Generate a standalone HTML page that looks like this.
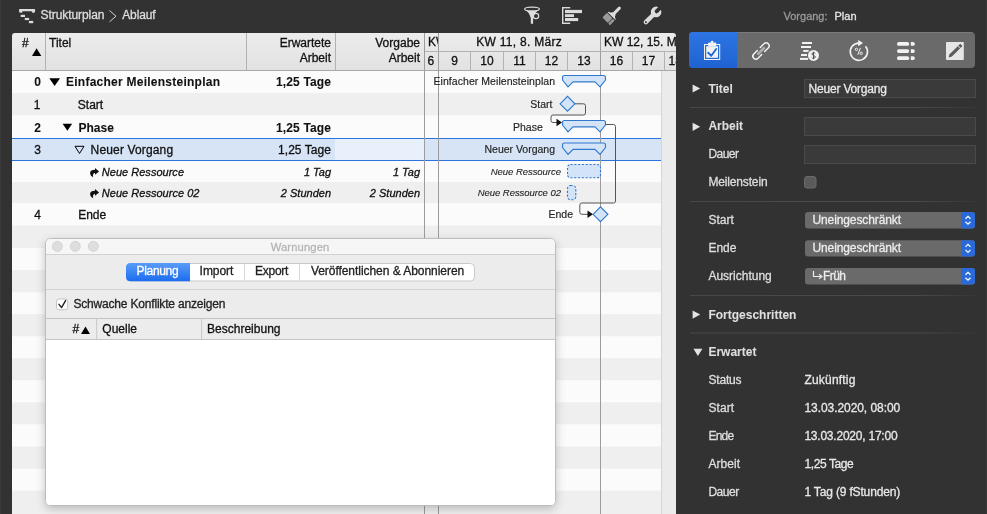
<!DOCTYPE html>
<html><head><meta charset="utf-8"><title>Ablauf</title>
<style>html,body{margin:0;padding:0;background:#323232;}body{width:987px;height:514px;overflow:hidden;}svg{display:block;font-family:"Liberation Sans", sans-serif;will-change:transform;}</style>
</head><body>
<svg width="987" height="514" viewBox="0 0 987 514">
<defs><linearGradient id="hdr" x1="0" y1="0" x2="0" y2="1"><stop offset="0" stop-color="#ececec"/><stop offset="1" stop-color="#e2e2e2"/></linearGradient><linearGradient id="blue" x1="0" y1="0" x2="0" y2="1"><stop offset="0" stop-color="#2d74e4"/><stop offset="1" stop-color="#1f63d2"/></linearGradient><linearGradient id="blue2" x1="0" y1="0" x2="0" y2="1"><stop offset="0" stop-color="#5a9cf8"/><stop offset="1" stop-color="#1b6cf0"/></linearGradient><linearGradient id="sep" x1="0" y1="0" x2="1" y2="0"><stop offset="0" stop-color="#484848"/><stop offset="0.8" stop-color="#4a4a4a"/><stop offset="1" stop-color="#363636"/></linearGradient><filter id="shadow" x="-10%" y="-10%" width="120%" height="120%"><feDropShadow dx="0" dy="3" stdDeviation="5" flood-color="#000" flood-opacity="0.22"/></filter></defs>
<rect x="0" y="0" width="987" height="514" fill="#323232" /><rect x="0" y="0" width="1" height="514" fill="#3a3a3a" /><rect x="985.6" y="0" width="1.4" height="514" fill="#393939" /><g fill="#dcdcdc"><rect x="19" y="9" width="16.2" height="2.2" rx="1"/><rect x="19.2" y="9.2" width="3.2" height="3.6" rx="1.2"/><rect x="31.8" y="9.2" width="3.2" height="3.6" rx="1.2"/><rect x="20.7" y="14.8" width="4.3" height="2.2"/><rect x="24.8" y="17.9" width="4.3" height="2.2"/><rect x="28.9" y="20.9" width="4.3" height="2.3"/></g><text x="40.5" y="19.1" font-size="12" fill="#dedede" font-weight="normal" font-style="normal" text-anchor="start" textLength="64" lengthAdjust="spacing" stroke="#dedede" stroke-width="0.3" >Strukturplan</text><polyline points="109.5,10.5 116,16.2 109.5,21.8" fill="none" stroke="#cfcfcf" stroke-width="1"/><text x="122.2" y="19.1" font-size="12" fill="#dedede" font-weight="normal" font-style="normal" text-anchor="start" textLength="33.5" lengthAdjust="spacing" stroke="#dedede" stroke-width="0.3" >Ablauf</text><g stroke="#dcdcdc" stroke-width="1.2" fill="none"><ellipse cx="532" cy="9" rx="7.4" ry="1.9"/><circle cx="536" cy="16" r="2.7"/></g><path d="M525.5,10.2 Q529,12 530.8,18 L530.8,23.8 L533.1,23.8 L533.1,18 Q535,12 538.5,10.2 Q532,12 525.5,10.2Z" fill="#dcdcdc"/><g fill="#dcdcdc"><rect x="562" y="7" width="1.4" height="17"/><rect x="562" y="7" width="8.2" height="1.4"/><rect x="562" y="22.6" width="8.2" height="1.4"/><rect x="565" y="9.9" width="17" height="3.2"/><rect x="565" y="14.2" width="9" height="2.8"/><rect x="565" y="18" width="13.2" height="3.1"/></g><g transform="translate(611.5,16) rotate(45)" fill="#dcdcdc"><rect x="-1.5" y="-12.6" width="3" height="9.6" rx="1.5"/><path d="M-1.8,-4 L1.8,-4 Q2.5,-1.5 5.4,-0.6 L5.4,0 L-5.4,0 L-5.4,-0.6 Q-2.5,-1.5 -1.8,-4 Z"/><rect x="-5.5" y="0.9" width="7.7" height="6.6" rx="1" fill="#9a9a9a"/><rect x="2.9" y="0.9" width="2.6" height="6.8" rx="0.8" fill="#9a9a9a"/></g><g transform="translate(651.5,16.5) rotate(45)"><rect x="-2.2" y="-4" width="4.4" height="14.2" rx="2.2" fill="#dcdcdc"/><circle cx="0" cy="-6.5" r="5.3" fill="#dcdcdc"/><rect x="-1.9" y="-13" width="3.8" height="5.8" fill="#323232"/><circle cx="0" cy="-7.2" r="1.9" fill="#323232"/><circle cx="0" cy="7.9" r="1" fill="#323232"/></g><rect x="12" y="71" width="650" height="443" fill="#efefef" /><rect x="12" y="71" width="650" height="22" fill="#fbfbfb" /><rect x="12" y="115.3" width="650" height="22.700000000000003" fill="#fbfbfb" /><rect x="12" y="160.5" width="650" height="21.5" fill="#fbfbfb" /><rect x="12" y="203" width="650" height="22.5" fill="#fbfbfb" /><rect x="12" y="248" width="650" height="22" fill="#fbfbfb" /><rect x="12" y="292.3" width="650" height="21.899999999999977" fill="#fbfbfb" /><rect x="12" y="336.2" width="650" height="22.0" fill="#fbfbfb" /><rect x="12" y="380.2" width="650" height="22.100000000000023" fill="#fbfbfb" /><rect x="12" y="424.3" width="650" height="22.19999999999999" fill="#fbfbfb" /><rect x="12" y="468.6" width="650" height="22.0" fill="#fbfbfb" /><rect x="12" y="138" width="650" height="22.5" fill="#d6e4f6" /><rect x="335" y="138" width="89" height="22.5" fill="#e8f0fb" /><line x1="12" y1="138.5" x2="662" y2="138.5" stroke="#2a74e2" stroke-width="1" /><line x1="12" y1="160.5" x2="662" y2="160.5" stroke="#2a74e2" stroke-width="1" /><rect x="662" y="71" width="14" height="443" fill="#ebebeb" /><line x1="661.5" y1="71" x2="661.5" y2="514" stroke="#d6d6d6" stroke-width="1" /><path d="M12,36 Q12,33 15,33 L673,33 Q676,33 676,36 L676,70 L12,70 Z" fill="url(#hdr)"/><line x1="12" y1="70.5" x2="676" y2="70.5" stroke="#a8a8a8" stroke-width="1" /><line x1="45.5" y1="33" x2="45.5" y2="70" stroke="#b2b2b2" stroke-width="1" /><line x1="246.5" y1="33" x2="246.5" y2="70" stroke="#b2b2b2" stroke-width="1" /><line x1="335.5" y1="33" x2="335.5" y2="70" stroke="#b2b2b2" stroke-width="1" /><line x1="424.5" y1="33" x2="424.5" y2="514" stroke="#9c9c9c" stroke-width="1" /><line x1="438.5" y1="33" x2="438.5" y2="514" stroke="#9c9c9c" stroke-width="1" /><line x1="600.5" y1="33" x2="600.5" y2="514" stroke="#9c9c9c" stroke-width="1" /><line x1="425" y1="51.5" x2="676" y2="51.5" stroke="#b2b2b2" stroke-width="1" /><line x1="470.5" y1="51.5" x2="470.5" y2="70" stroke="#b2b2b2" stroke-width="1" /><line x1="503.5" y1="51.5" x2="503.5" y2="70" stroke="#b2b2b2" stroke-width="1" /><line x1="535.5" y1="51.5" x2="535.5" y2="70" stroke="#b2b2b2" stroke-width="1" /><line x1="567.5" y1="51.5" x2="567.5" y2="70" stroke="#b2b2b2" stroke-width="1" /><line x1="632.5" y1="51.5" x2="632.5" y2="70" stroke="#b2b2b2" stroke-width="1" /><line x1="664.5" y1="51.5" x2="664.5" y2="70" stroke="#b2b2b2" stroke-width="1" /><text x="22" y="47" font-size="12" fill="#111" font-weight="normal" font-style="normal" text-anchor="start" stroke="#111" stroke-width="0.3" >#</text><path d="M32,56 L36.6,48.2 L41.3,56 Z" fill="#000"/><text x="49" y="47" font-size="12" fill="#111" font-weight="normal" font-style="normal" text-anchor="start" stroke="#111" stroke-width="0.3" >Titel</text><text x="331" y="46.7" font-size="12" fill="#111" font-weight="normal" font-style="normal" text-anchor="end" stroke="#111" stroke-width="0.3" >Erwartete</text><text x="331" y="61.9" font-size="12" fill="#111" font-weight="normal" font-style="normal" text-anchor="end" stroke="#111" stroke-width="0.3" >Arbeit</text><text x="420" y="46.7" font-size="12" fill="#111" font-weight="normal" font-style="normal" text-anchor="end" stroke="#111" stroke-width="0.3" >Vorgabe</text><text x="420" y="61.9" font-size="12" fill="#111" font-weight="normal" font-style="normal" text-anchor="end" stroke="#111" stroke-width="0.3" >Arbeit</text><clipPath id="kwclip"><rect x="425" y="33" width="13" height="20"/></clipPath><text x="428" y="45.8" font-size="12" fill="#111" font-weight="normal" font-style="normal" text-anchor="start" stroke="#111" stroke-width="0.3" clip-path="url(#kwclip)">KW</text><text x="519" y="45.8" font-size="12" fill="#111" font-weight="normal" font-style="normal" text-anchor="middle" textLength="85.5" lengthAdjust="spacing" stroke="#111" stroke-width="0.3" >KW 11, 8. März</text><clipPath id="kw12clip"><rect x="601" y="33" width="75" height="20"/></clipPath><text x="604" y="45.8" font-size="12" fill="#111" font-weight="normal" font-style="normal" text-anchor="start" stroke="#111" stroke-width="0.3" clip-path="url(#kw12clip)">KW 12, 15. März</text><clipPath id="dayclip"><rect x="425" y="52" width="251" height="18"/></clipPath><g clip-path="url(#dayclip)"><text x="427.6" y="64.8" font-size="12" fill="#111" font-weight="normal" font-style="normal" text-anchor="start" stroke="#111" stroke-width="0.3" >6</text><text x="454.5" y="64.8" font-size="12" fill="#111" font-weight="normal" font-style="normal" text-anchor="middle" stroke="#111" stroke-width="0.3" >9</text><text x="487.0" y="64.8" font-size="12" fill="#111" font-weight="normal" font-style="normal" text-anchor="middle" stroke="#111" stroke-width="0.3" >10</text><text x="519.5" y="64.8" font-size="12" fill="#111" font-weight="normal" font-style="normal" text-anchor="middle" stroke="#111" stroke-width="0.3" >11</text><text x="551.5" y="64.8" font-size="12" fill="#111" font-weight="normal" font-style="normal" text-anchor="middle" stroke="#111" stroke-width="0.3" >12</text><text x="584.0" y="64.8" font-size="12" fill="#111" font-weight="normal" font-style="normal" text-anchor="middle" stroke="#111" stroke-width="0.3" >13</text><text x="616.5" y="64.8" font-size="12" fill="#111" font-weight="normal" font-style="normal" text-anchor="middle" stroke="#111" stroke-width="0.3" >16</text><text x="648.5" y="64.8" font-size="12" fill="#111" font-weight="normal" font-style="normal" text-anchor="middle" stroke="#111" stroke-width="0.3" >17</text><text x="668.5" y="64.8" font-size="12" fill="#111" font-weight="normal" font-style="normal" text-anchor="start" stroke="#111" stroke-width="0.3" >18</text></g><text x="41" y="86" font-size="12" fill="#111" font-weight="bold" font-style="normal" text-anchor="end" stroke="#111" stroke-width="0.08" >0</text><path d="M49.3,78.2 L60,78.2 L54.65,86 Z" fill="#000"/><text x="66" y="86" font-size="12" fill="#111" font-weight="bold" font-style="normal" text-anchor="start" textLength="154" lengthAdjust="spacing" stroke="#111" stroke-width="0.08" >Einfacher Meilensteinplan</text><text x="331" y="86" font-size="12" fill="#111" font-weight="bold" font-style="normal" text-anchor="end" textLength="55" lengthAdjust="spacing" stroke="#111" stroke-width="0.08" >1,25 Tage</text><text x="40.5" y="108.6" font-size="12" fill="#111" font-weight="normal" font-style="normal" text-anchor="end" stroke="#111" stroke-width="0.3" >1</text><text x="77.8" y="108.6" font-size="12" fill="#111" font-weight="normal" font-style="normal" text-anchor="start" stroke="#111" stroke-width="0.3" >Start</text><text x="41" y="132" font-size="12" fill="#111" font-weight="bold" font-style="normal" text-anchor="end" stroke="#111" stroke-width="0.08" >2</text><path d="M62.6,123.8 L72.2,123.8 L67.4,130.8 Z" fill="#000"/><text x="78.5" y="131.8" font-size="12" fill="#111" font-weight="bold" font-style="normal" text-anchor="start" stroke="#111" stroke-width="0.08" >Phase</text><text x="331" y="131.8" font-size="12" fill="#111" font-weight="bold" font-style="normal" text-anchor="end" textLength="55" lengthAdjust="spacing" stroke="#111" stroke-width="0.08" >1,25 Tage</text><text x="41" y="154" font-size="12" fill="#111" font-weight="normal" font-style="normal" text-anchor="end" stroke="#111" stroke-width="0.3" >3</text><path d="M75,146.3 L84,146.3 L79.5,153.5 Z" fill="none" stroke="#000" stroke-width="1"/><text x="90.6" y="154" font-size="12" fill="#111" font-weight="normal" font-style="normal" text-anchor="start" textLength="82.5" lengthAdjust="spacing" stroke="#111" stroke-width="0.3" >Neuer Vorgang</text><text x="331" y="154" font-size="12" fill="#111" font-weight="normal" font-style="normal" text-anchor="end" textLength="53" lengthAdjust="spacing" stroke="#111" stroke-width="0.3" >1,25 Tage</text><g transform="translate(0,0)"><path d="M95,168 L99.1,171.4 L95,174.8 L95,173.1 Q92.6,173 93.1,177.2 Q89.9,175.8 90.1,172.6 Q90.4,169.6 95,169.7 Z" fill="#111"/></g><g transform="translate(0,21)"><path d="M95,168 L99.1,171.4 L95,174.8 L95,173.1 Q92.6,173 93.1,177.2 Q89.9,175.8 90.1,172.6 Q90.4,169.6 95,169.7 Z" fill="#111"/></g><text x="101.8" y="175.7" font-size="11" fill="#111" font-weight="normal" font-style="italic" text-anchor="start" textLength="82.2" lengthAdjust="spacing" stroke="#111" stroke-width="0.3" >Neue Ressource</text><text x="331" y="175.7" font-size="11" fill="#111" font-weight="normal" font-style="italic" text-anchor="end" stroke="#111" stroke-width="0.3" >1 Tag</text><text x="420" y="175.7" font-size="11" fill="#111" font-weight="normal" font-style="italic" text-anchor="end" stroke="#111" stroke-width="0.3" >1 Tag</text><text x="101.8" y="196.7" font-size="11" fill="#111" font-weight="normal" font-style="italic" text-anchor="start" textLength="97.6" lengthAdjust="spacing" stroke="#111" stroke-width="0.3" >Neue Ressource 02</text><text x="331" y="196.7" font-size="11" fill="#111" font-weight="normal" font-style="italic" text-anchor="end" stroke="#111" stroke-width="0.3" >2 Stunden</text><text x="420" y="196.7" font-size="11" fill="#111" font-weight="normal" font-style="italic" text-anchor="end" stroke="#111" stroke-width="0.3" >2 Stunden</text><text x="41" y="218.8" font-size="12" fill="#111" font-weight="normal" font-style="normal" text-anchor="end" stroke="#111" stroke-width="0.3" >4</text><text x="78.2" y="218.8" font-size="12" fill="#111" font-weight="normal" font-style="normal" text-anchor="start" stroke="#111" stroke-width="0.3" >Ende</text><text x="555" y="84.9" font-size="10.5" fill="#222" font-weight="normal" font-style="normal" text-anchor="end" textLength="121.5" lengthAdjust="spacing" stroke="#222" stroke-width="0.15" >Einfacher Meilensteinplan</text><text x="552.5" y="107.6" font-size="10.5" fill="#222" font-weight="normal" font-style="normal" text-anchor="end" stroke="#222" stroke-width="0.15" >Start</text><text x="542.8" y="130.7" font-size="10.5" fill="#222" font-weight="normal" font-style="normal" text-anchor="end" stroke="#222" stroke-width="0.15" >Phase</text><text x="555" y="153.2" font-size="10.5" fill="#222" font-weight="normal" font-style="normal" text-anchor="end" textLength="70.5" lengthAdjust="spacing" stroke="#222" stroke-width="0.15" >Neuer Vorgang</text><text x="561" y="174.9" font-size="9.5" fill="#222" font-weight="normal" font-style="italic" text-anchor="end" textLength="70.3" lengthAdjust="spacing" stroke="#222" stroke-width="0.1" >Neue Ressource</text><text x="561" y="195.6" font-size="9.5" fill="#222" font-weight="normal" font-style="italic" text-anchor="end" textLength="83.3" lengthAdjust="spacing" stroke="#222" stroke-width="0.1" >Neue Ressource 02</text><text x="573" y="217.6" font-size="10.5" fill="#222" font-weight="normal" font-style="normal" text-anchor="end" stroke="#222" stroke-width="0.15" >Ende</text><path d="M564.5,75.5 L603.5,75.5 Q605.5,75.5 605.5,77.5 L605.5,80.0 L600.0,86.8 L595.0,81.8 L573.0,81.8 L568.0,86.8 L562.5,80.0 L562.5,77.5 Q562.5,75.5 564.5,75.5 Z" fill="#d3e3f8" stroke="#3079cc" stroke-width="1.15" stroke-linejoin="round"/><path d="M564.5,120.5 L603.5,120.5 Q605.5,120.5 605.5,122.5 L605.5,125.0 L600.0,131.8 L595.0,126.8 L573.0,126.8 L568.0,131.8 L562.5,125.0 L562.5,122.5 Q562.5,120.5 564.5,120.5 Z" fill="#d3e3f8" stroke="#3079cc" stroke-width="1.15" stroke-linejoin="round"/><path d="M564.5,143 L603.5,143 Q605.5,143 605.5,145 L605.5,147.5 L600.0,154.3 L595.0,149.3 L573.0,149.3 L568.0,154.3 L562.5,147.5 L562.5,145 Q562.5,143 564.5,143 Z" fill="#d3e3f8" stroke="#3079cc" stroke-width="1.15" stroke-linejoin="round"/><rect x="567.5" y="164.5" width="33" height="13.3" rx="3" fill="#d3e3f8" stroke="#3079cc" stroke-width="1.1" stroke-dasharray="2.2,1.6"/><rect x="567.5" y="185.5" width="8.3" height="14.2" rx="3" fill="#d3e3f8" stroke="#3079cc" stroke-width="1.1" stroke-dasharray="2.2,1.6"/><path d="M575,103.8 L583.5,103.8 Q585.5,103.8 585.5,105.8 L585.5,113 Q585.5,115 583.5,115 L553,115 Q551,115 551,117 L551,120.5 Q551,122.5 553,122.5 L557,122.5" fill="none" stroke="#555" stroke-width="1"/><path d="M556.5,118.8 L562,122.5 L556.5,126.2 Z" fill="#111"/><path d="M605.5,124.5 L613.5,124.5 Q615.5,124.5 615.5,126.5 L615.5,201 Q615.5,203 613.5,203 L581.8,203 Q579.8,203 579.8,205 L579.8,212.3 Q579.8,214.3 581.8,214.3 L588,214.3" fill="none" stroke="#555" stroke-width="1"/><path d="M587.5,210.6 L593,214.3 L587.5,218 Z" fill="#111"/><path d="M560.1,103.8 L567.5,96.39999999999999 L574.9,103.8 L567.5,111.2 Z" fill="#d3e3f8" stroke="#3079cc" stroke-width="1.15"/><path d="M593.1,214.3 L600.5,206.9 L607.9,214.3 L600.5,221.70000000000002 Z" fill="#d3e3f8" stroke="#3079cc" stroke-width="1.15"/><text x="783.5" y="20.2" font-size="11" fill="#9a9a9a" font-weight="normal" font-style="normal" text-anchor="start" stroke="#9a9a9a" stroke-width="0.3" >Vorgang:</text><text x="834.5" y="20.2" font-size="11" fill="#e6e6e6" font-weight="normal" font-style="normal" text-anchor="start" stroke="#e6e6e6" stroke-width="0.3" >Plan</text><path d="M693,32 L971,32 Q975,32 975,36 L975,64 Q975,68 971,68 L693,68 Q689,68 689,64 L689,36 Q689,32 693,32 Z" fill="#6a6a6a"/><line x1="692" y1="32.5" x2="972" y2="32.5" stroke="#7a7a7a" stroke-width="1" /><path d="M693,32 L737,32 L737,68 L693,68 Q689,68 689,64 L689,36 Q689,32 693,32 Z" fill="url(#blue)"/><rect x="704.5" y="44.5" width="15.2" height="15" fill="none" stroke="#f2f2f2" stroke-width="1"/><rect x="706.2" y="46.2" width="11.8" height="11.6" fill="#f2f2f2"/><rect x="708" y="42.6" width="8.2" height="3.6" rx="1" fill="#f2f2f2"/><circle cx="712.1" cy="42" r="1.3" fill="#f2f2f2"/><path d="M708.2,52.8 L711.3,55.8 L716.2,49" fill="none" stroke="#2066d6" stroke-width="1.9" stroke-linecap="round" stroke-linejoin="round"/><g transform="translate(761,51) rotate(-45)" fill="none" stroke="#f2f2f2" stroke-width="1.5" stroke-linecap="round"><path d="M2,-3 L7.2,-3 A3,3 0 0 1 7.2,3 L2.2,3"/><path d="M-2,3 L-7.2,3 A3,3 0 0 1 -7.2,-3 L-2.2,-3"/></g><g transform="translate(761,51) rotate(-45)"><rect x="-5.2" y="-1.25" width="10.6" height="2.5" rx="1.2" fill="#b2b2b2"/></g><g fill="#f2f2f2"><rect x="802" y="42" width="10" height="2"/><rect x="801" y="46" width="10" height="2"/><rect x="803.2" y="50" width="5.5" height="1.9"/><rect x="801" y="54" width="6" height="2"/><rect x="800" y="57.9" width="8.2" height="2"/><circle cx="813.5" cy="55.4" r="6.3" fill="#6a6a6a"/><circle cx="813.5" cy="55.4" r="5.5"/></g><path d="M815.3,53.5 C815,52.5 811.9,52.3 811.9,54 C811.9,55.6 815.3,55.2 815.3,57 C815.3,58.7 812.1,58.6 811.7,57.5 M813.5,51.7 L813.5,59.2" fill="none" stroke="#555" stroke-width="1"/><path d="M858.9,43.1 A8.6,8.6 0 1 0 865.5,46.2" fill="none" stroke="#f2f2f2" stroke-width="1.6"/><path d="M858.2,39.9 L863,43.1 L858.2,46.3 Z" fill="#f2f2f2"/><g fill="none" stroke="#f2f2f2" stroke-width="1"><circle cx="856.4" cy="49.4" r="1.2"/><circle cx="861.2" cy="53.3" r="1.2"/><line x1="857.8" y1="54.8" x2="860.4" y2="47.9"/></g><rect x="897" y="42.1" width="12.2" height="3.7" rx="1.85" fill="#f2f2f2"/><path d="M910.8,42.1 L913,42.1 A1.85,1.85 0 0 1 913,45.800000000000004 L910.8,45.800000000000004 Z" fill="#f2f2f2"/><rect x="897" y="49.2" width="12.2" height="3.7" rx="1.85" fill="#f2f2f2"/><path d="M910.8,49.2 L913,49.2 A1.85,1.85 0 0 1 913,52.900000000000006 L910.8,52.900000000000006 Z" fill="#f2f2f2"/><rect x="897" y="56.3" width="12.2" height="3.7" rx="1.85" fill="#f2f2f2"/><path d="M910.8,56.3 L913,56.3 A1.85,1.85 0 0 1 913,60.0 L910.8,60.0 Z" fill="#f2f2f2"/><rect x="946" y="42" width="17.8" height="18" rx="0.8" fill="#e6e6e6"/><g transform="translate(955,51.2) rotate(45)"><path d="M-1.6,-9 L1.6,-9 L1.6,6 L0,9 L-1.6,6 Z" fill="#5a5a5a"/><rect x="-1.7" y="-6.2" width="3.4" height="0.7" fill="#e6e6e6"/></g><path d="M692.6,84.4 L700.2,88.5 L692.6,92.6 Z" fill="#e4e4e4"/><text x="708.4" y="93.3" font-size="12" fill="#dedede" font-weight="bold" font-style="normal" text-anchor="start" stroke="#dedede" stroke-width="0.08" >Titel</text><rect x="804.5" y="79.5" width="171" height="18" fill="#3a3a3a" stroke="#4a4a4a" stroke-width="1"/><text x="808.5" y="93.3" font-size="12" fill="#e8e8e8" font-weight="normal" font-style="normal" text-anchor="start" textLength="78.5" lengthAdjust="spacing" stroke="#e8e8e8" stroke-width="0.3" >Neuer Vorgang</text><rect x="690" y="107.0" width="285" height="1" fill="url(#sep)" /><path d="M692.6,122.7 L700.2,126.8 L692.6,130.9 Z" fill="#e4e4e4"/><text x="708.4" y="130.3" font-size="12" fill="#dedede" font-weight="bold" font-style="normal" text-anchor="start" stroke="#dedede" stroke-width="0.08" >Arbeit</text><rect x="804.5" y="117.5" width="171" height="18" fill="#3a3a3a" stroke="#4a4a4a" stroke-width="1"/><text x="708.4" y="157.8" font-size="12" fill="#dedede" font-weight="normal" font-style="normal" text-anchor="start" textLength="30.6" lengthAdjust="spacing" stroke="#dedede" stroke-width="0.3" >Dauer</text><rect x="804.5" y="145.5" width="171" height="18" fill="#3a3a3a" stroke="#4a4a4a" stroke-width="1"/><text x="708.4" y="185.8" font-size="12" fill="#dedede" font-weight="normal" font-style="normal" text-anchor="start" textLength="59.2" lengthAdjust="spacing" stroke="#dedede" stroke-width="0.3" >Meilenstein</text><rect x="804.5" y="176.5" width="11.5" height="11.5" rx="2.5" fill="#5a5a5a" stroke="#6a6a6a" stroke-width="1"/><rect x="690" y="201.0" width="285" height="1" fill="url(#sep)" /><rect x="805" y="212.1" width="170" height="16.3" rx="3" fill="#6a6a6a"/><path d="M961,212.1 L972,212.1 Q975,212.1 975,215.1 L975,225.4 Q975,228.4 972,228.4 L961,228.4 Z" fill="#2a6ad8"/><polyline points="965.5,218.75 968,216.25 970.5,218.75" fill="none" stroke="#fff" stroke-width="1.2"/><polyline points="965.5,221.75 968,224.25 970.5,221.75" fill="none" stroke="#fff" stroke-width="1.2"/><text x="812.5" y="223.9" font-size="12" fill="#ececec" font-weight="normal" font-style="normal" text-anchor="start" textLength="88.5" lengthAdjust="spacing" stroke="#ececec" stroke-width="0.3" >Uneingeschränkt</text><text x="708.4" y="223.9" font-size="12" fill="#dedede" font-weight="normal" font-style="normal" text-anchor="start" stroke="#dedede" stroke-width="0.3" >Start</text><rect x="805" y="240.2" width="170" height="16.3" rx="3" fill="#6a6a6a"/><path d="M961,240.2 L972,240.2 Q975,240.2 975,243.2 L975,253.5 Q975,256.5 972,256.5 L961,256.5 Z" fill="#2a6ad8"/><polyline points="965.5,246.85 968,244.35 970.5,246.85" fill="none" stroke="#fff" stroke-width="1.2"/><polyline points="965.5,249.85 968,252.35 970.5,249.85" fill="none" stroke="#fff" stroke-width="1.2"/><text x="812.5" y="252" font-size="12" fill="#ececec" font-weight="normal" font-style="normal" text-anchor="start" textLength="88.5" lengthAdjust="spacing" stroke="#ececec" stroke-width="0.3" >Uneingeschränkt</text><text x="708.4" y="252" font-size="12" fill="#dedede" font-weight="normal" font-style="normal" text-anchor="start" stroke="#dedede" stroke-width="0.3" >Ende</text><rect x="805" y="268.1" width="170" height="16.3" rx="3" fill="#6a6a6a"/><path d="M961,268.1 L972,268.1 Q975,268.1 975,271.1 L975,281.40000000000003 Q975,284.40000000000003 972,284.40000000000003 L961,284.40000000000003 Z" fill="#2a6ad8"/><polyline points="965.5,274.75 968,272.25 970.5,274.75" fill="none" stroke="#fff" stroke-width="1.2"/><polyline points="965.5,277.75 968,280.25 970.5,277.75" fill="none" stroke="#fff" stroke-width="1.2"/><path d="M813.5,271 L813.5,276.5 L821,276.5" fill="none" stroke="#ececec" stroke-width="1.2"/><path d="M819,274.3 L822,276.5 L819,278.7" fill="none" stroke="#ececec" stroke-width="1.1"/><text x="823" y="280.4" font-size="12" fill="#ececec" font-weight="normal" font-style="normal" text-anchor="start" textLength="23" lengthAdjust="spacing" stroke="#ececec" stroke-width="0.3" >Früh</text><text x="708.4" y="280.4" font-size="12" fill="#dedede" font-weight="normal" font-style="normal" text-anchor="start" stroke="#dedede" stroke-width="0.3" >Ausrichtung</text><rect x="690" y="295.0" width="285" height="1" fill="url(#sep)" /><path d="M692.6,310.5 L700.2,314.6 L692.6,318.7 Z" fill="#e4e4e4"/><text x="708.4" y="318.5" font-size="12" fill="#dedede" font-weight="bold" font-style="normal" text-anchor="start" stroke="#dedede" stroke-width="0.08" >Fortgeschritten</text><rect x="690" y="332.5" width="285" height="1" fill="url(#sep)" /><path d="M693.4,348.8 L702.4,348.8 L697.9,356 Z" fill="#e4e4e4"/><text x="708.4" y="355.8" font-size="12" fill="#dedede" font-weight="bold" font-style="normal" text-anchor="start" stroke="#dedede" stroke-width="0.08" >Erwartet</text><text x="708.4" y="384.3" font-size="12" fill="#dedede" font-weight="normal" font-style="normal" text-anchor="start" textLength="33.2" lengthAdjust="spacing" stroke="#dedede" stroke-width="0.3" >Status</text><text x="804.4" y="384.3" font-size="12" fill="#e8e8e8" font-weight="normal" font-style="normal" text-anchor="start" textLength="51" lengthAdjust="spacing" stroke="#e8e8e8" stroke-width="0.3" >Zukünftig</text><text x="708.4" y="412.3" font-size="12" fill="#dedede" font-weight="normal" font-style="normal" text-anchor="start" textLength="25.8" lengthAdjust="spacing" stroke="#dedede" stroke-width="0.3" >Start</text><text x="804.4" y="412.3" font-size="12" fill="#e8e8e8" font-weight="normal" font-style="normal" text-anchor="start" textLength="95.8" lengthAdjust="spacing" stroke="#e8e8e8" stroke-width="0.3" >13.03.2020, 08:00</text><text x="708.4" y="440.3" font-size="12" fill="#dedede" font-weight="normal" font-style="normal" text-anchor="start" textLength="25.8" lengthAdjust="spacing" stroke="#dedede" stroke-width="0.3" >Ende</text><text x="804.4" y="440.3" font-size="12" fill="#e8e8e8" font-weight="normal" font-style="normal" text-anchor="start" textLength="93.2" lengthAdjust="spacing" stroke="#e8e8e8" stroke-width="0.3" >13.03.2020, 17:00</text><text x="708.4" y="468.3" font-size="12" fill="#dedede" font-weight="normal" font-style="normal" text-anchor="start" textLength="31.8" lengthAdjust="spacing" stroke="#dedede" stroke-width="0.3" >Arbeit</text><text x="804.4" y="468.3" font-size="12" fill="#e8e8e8" font-weight="normal" font-style="normal" text-anchor="start" textLength="49.4" lengthAdjust="spacing" stroke="#e8e8e8" stroke-width="0.3" >1,25 Tage</text><text x="708.4" y="496.3" font-size="12" fill="#dedede" font-weight="normal" font-style="normal" text-anchor="start" textLength="30.8" lengthAdjust="spacing" stroke="#dedede" stroke-width="0.3" >Dauer</text><text x="804.4" y="496.3" font-size="12" fill="#e8e8e8" font-weight="normal" font-style="normal" text-anchor="start" textLength="95.8" lengthAdjust="spacing" stroke="#e8e8e8" stroke-width="0.3" >1 Tag (9 fStunden)</text><rect x="45.5" y="238.5" width="510.0" height="267.0" rx="5" fill="#ececec" stroke="#bdbdbd" stroke-width="1" filter="url(#shadow)"/><path d="M46.0,243.5 Q46.0,239.0 50.5,239.0 L550.5,239.0 Q555.0,239.0 555.0,243.5 L555.0,254 L46.0,254 Z" fill="#f6f6f6"/><line x1="46.0" y1="254.5" x2="555.0" y2="254.5" stroke="#d2d2d2" stroke-width="1" /><circle cx="57.4" cy="246.4" r="5" fill="#dedede" stroke="#cdcdcd" stroke-width="0.8"/><circle cx="75.3" cy="246.4" r="5" fill="#dedede" stroke="#cdcdcd" stroke-width="0.8"/><circle cx="93.3" cy="246.4" r="5" fill="#dedede" stroke="#cdcdcd" stroke-width="0.8"/><text x="300" y="251" font-size="11.2" fill="#b5b5b5" font-weight="normal" font-style="normal" text-anchor="middle" textLength="58.6" lengthAdjust="spacing" stroke="#b5b5b5" stroke-width="0.3" >Warnungen</text><rect x="126.5" y="263.5" width="348" height="17.5" rx="4" fill="#fff" stroke="#c9c9c9" stroke-width="1"/><path d="M130.5,263 L190,263 L190,281.3 L130.5,281.3 Q126,281.3 126,276.8 L126,267.5 Q126,263 130.5,263 Z" fill="url(#blue2)"/><line x1="244.5" y1="264" x2="244.5" y2="280.5" stroke="#dadada" stroke-width="1" /><line x1="299.5" y1="264" x2="299.5" y2="280.5" stroke="#dadada" stroke-width="1" /><text x="136.6" y="275.3" font-size="12" fill="#fff" font-weight="normal" font-style="normal" text-anchor="start" textLength="42" lengthAdjust="spacing" stroke="#fff" stroke-width="0.3" >Planung</text><text x="199.6" y="275.3" font-size="12" fill="#222" font-weight="normal" font-style="normal" text-anchor="start" textLength="33.8" lengthAdjust="spacing" stroke="#222" stroke-width="0.3" >Import</text><text x="255" y="275.3" font-size="12" fill="#222" font-weight="normal" font-style="normal" text-anchor="start" textLength="33.4" lengthAdjust="spacing" stroke="#222" stroke-width="0.3" >Export</text><text x="310.9" y="275.3" font-size="12" fill="#222" font-weight="normal" font-style="normal" text-anchor="start" textLength="153.3" lengthAdjust="spacing" stroke="#222" stroke-width="0.3" >Veröffentlichen &amp; Abonnieren</text><line x1="46.0" y1="289.5" x2="555.0" y2="289.5" stroke="#d0d0d0" stroke-width="1" /><rect x="56.5" y="299" width="11.2" height="10.8" rx="2.5" fill="#fff" stroke="#bcbcbc" stroke-width="0.9"/><path d="M59,304.3 L61.5,307.6 L65.6,300.6" fill="none" stroke="#222" stroke-width="1.4" stroke-linecap="round" stroke-linejoin="round"/><text x="73.4" y="307.7" font-size="12" fill="#222" font-weight="normal" font-style="normal" text-anchor="start" textLength="152" lengthAdjust="spacing" stroke="#222" stroke-width="0.3" >Schwache Konflikte anzeigen</text><line x1="46.0" y1="318.5" x2="555.0" y2="318.5" stroke="#c4c4c4" stroke-width="1" /><line x1="46.0" y1="339.5" x2="555.0" y2="339.5" stroke="#c4c4c4" stroke-width="1" /><line x1="96.7" y1="319" x2="96.7" y2="339" stroke="#c8c8c8" stroke-width="1" /><line x1="201.6" y1="319" x2="201.6" y2="339" stroke="#c8c8c8" stroke-width="1" /><text x="72.4" y="332.6" font-size="12" fill="#111" font-weight="normal" font-style="normal" text-anchor="start" stroke="#111" stroke-width="0.3" >#</text><path d="M81,334 L85.5,326.5 L90,334 Z" fill="#000"/><text x="102.3" y="332.6" font-size="12" fill="#111" font-weight="normal" font-style="normal" text-anchor="start" stroke="#111" stroke-width="0.3" >Quelle</text><text x="207.1" y="332.6" font-size="12" fill="#111" font-weight="normal" font-style="normal" text-anchor="start" stroke="#111" stroke-width="0.3" >Beschreibung</text><path d="M46.0,340 L555.0,340 L555.0,500.5 Q555.0,505.0 550.5,505.0 L50.5,505.0 Q46.0,505.0 46.0,500.5 Z" fill="#fff"/>
</svg>
</body></html>
